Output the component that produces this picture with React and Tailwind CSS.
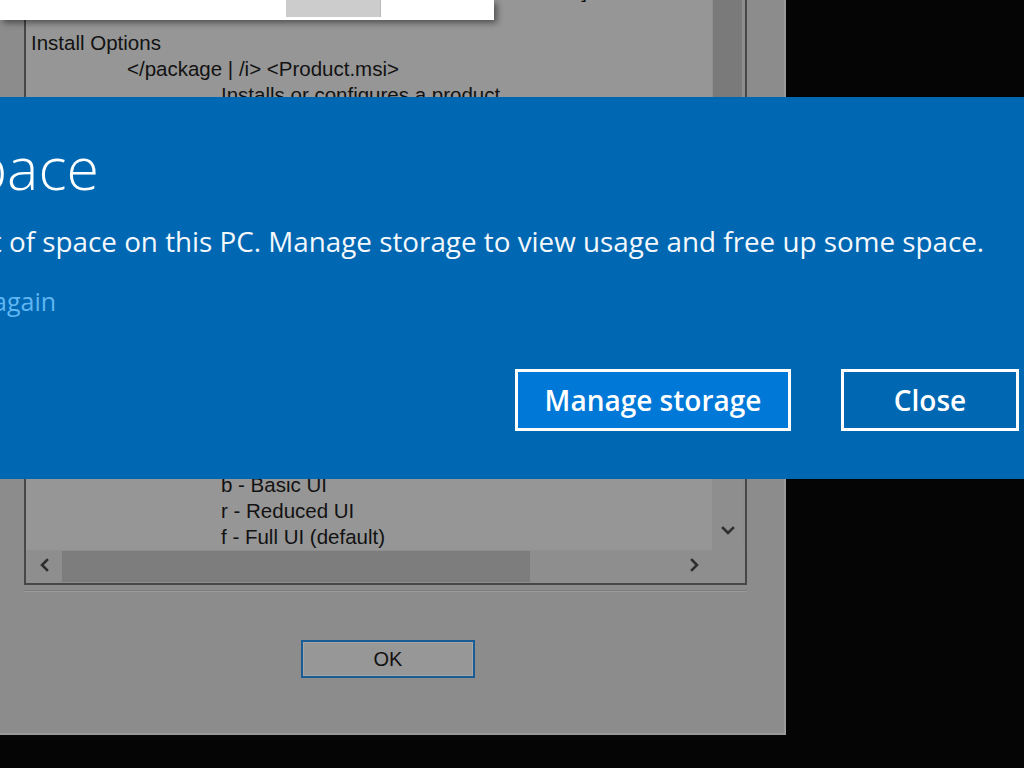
import React from "react";

const lines = [
  [0, "Windows \u00ae Installer. V 5.0.19041.1"],
  [0, ""],
  [0, "msiexec /Option <Required Parameter> [Optional Parameter]"],
  [0, ""],
  [0, "Install Options"],
  [1, "</package | /i> <Product.msi>"],
  [2, "Installs or configures a product"],
  [1, "</a> <Product.msi>"],
  [2, "Administrative install - Installs a product on the network"],
  [1, "</j<u|m> <Product.msi | /t <Transform List> | /g <Language ID>>"],
  [2, "Advertises a product - m to all users, u to current user"],
  [1, "</uninstall | /x> <Product.msi | ProductCode>"],
  [2, "Uninstalls the product"],
  [0, "Display Options"],
  [1, "/quiet"],
  [2, "Quiet mode, no user interaction"],
  [1, "/passive"],
  [2, "Unattended mode - progress bar only"],
  [1, "/q[n|b|r|f]"],
  [2, "Sets user interface level"],
  [2, "n - No UI"],
  [2, "b - Basic UI"],
  [2, "r - Reduced UI"],
  [2, "f - Full UI (default)"],
];

const indent = ["pl-[5px]", "pl-[101px]", "pl-[195px]"];

function Chevron({ dir }) {
  const pts = {
    left: "9,3 4,8 9,13",
    right: "5,3 10,8 5,13",
    down: "3,5 8,10 13,5",
  }[dir];
  return (
    <svg width="16" height="16" viewBox="0 0 16 16">
      <polyline points={pts} fill="none" stroke="#2e2e2e" strokeWidth="2.6" strokeLinecap="square" />
    </svg>
  );
}

export default function App() {
  return (
    <div className="relative w-[1024px] h-[768px] overflow-hidden bg-[#050505]">
      {/* Dimmed installer dialog */}
      <div className="flex flex-col w-[786px] h-[735px] bg-[#8c8c8c] border-r-2 border-b-2 border-[#9a9a9a] font-['Liberation_Sans',Arial,sans-serif] text-[#121212]">
        <div className="mt-[-76px] ml-[24px] w-[723px] flex flex-col border-2 border-[#474747]">
          <div className="flex">
            <div className="w-[686px] h-[624px] overflow-hidden bg-[#969696] flex flex-col">
              {lines.map(([lvl, t], i) => (
                <div key={i} className={`h-[26px] leading-[26px] text-[20.5px] whitespace-nowrap ${indent[lvl]}`}>
                  {t}
                </div>
              ))}
            </div>
            <div className="w-[31px] flex flex-col bg-[#8e8e8e]">
              <div className="h-[30px]" />
              <div className="h-[260px] bg-[#7a7a7a] mx-[1px]" />
              <div className="flex-1" />
              <div className="h-[38px] flex items-center justify-center">
                <Chevron dir="down" />
              </div>
            </div>
          </div>
          <div className="flex h-[33px] bg-[#8e8e8e] items-stretch">
            <div className="w-[36px] flex items-center justify-center pl-[4px] pb-[4px]">
              <Chevron dir="left" />
            </div>
            <div className="w-[468px] bg-[#7d7d7d] my-[1px]" />
            <div className="flex-1" />
            <div className="w-[38px] flex items-center justify-center pb-[4px]">
              <Chevron dir="right" />
            </div>
            <div className="w-[31px]" />
          </div>
        </div>
        <div className="ml-[24px] w-[723px] mt-[5px] border-t border-[#7c7c7c] border-b border-b-[#9c9c9c]" />
        <div className="ml-[301px] mt-[48px] w-[174px] h-[38px] border-2 border-[#1b5c94] flex">
          <div className="flex-1 border border-[#a6a6a6] bg-[#979797] flex items-center justify-center text-[20px] leading-none">
            OK
          </div>
        </div>
      </div>

      {/* White popup at top */}
      <div className="absolute left-0 top-0 w-[494px] h-[20px] bg-white shadow-[3px_3px_6px_rgba(0,0,0,0.45)] flex">
        <div className="ml-[286px] w-[95px] h-[17px] bg-[#cccccc] border-r border-[#b8b8b8]" />
      </div>

      {/* Blue banner */}
      <div className="absolute left-0 top-[97px] w-[1024px] h-[382px] bg-[#0067b2] overflow-hidden flex flex-col text-white font-['Open_Sans',sans-serif]">
        <div className="mt-[41px] ml-[-28px] flex whitespace-nowrap text-[59px] font-light leading-none">
          <span className="flex w-0 justify-end">Low on s</span>
          <span>pace</span>
        </div>
        <div className="mt-[31px] ml-[9px] flex whitespace-nowrap text-[27.8px] leading-none text-[#f4f8fc]">
          <span className="flex w-0 justify-end">You're running out{"\u00a0"}</span>
          <span>of space on this PC. Manage storage to view usage and free up some space.</span>
        </div>
        <div className="mt-[33px] ml-[7px] flex whitespace-nowrap text-[25px] leading-none text-[#5fb6f2]">
          <span className="flex w-0 justify-end">Don't show this a</span>
          <span>gain</span>
        </div>
        <div className="mt-[55px] flex justify-end gap-[50px] pr-[5px]">
          <div className="w-[276px] h-[62px] border-[3px] border-white bg-[#0078d7] flex items-center justify-center text-[28px] font-semibold leading-none">
            Manage storage
          </div>
          <div className="w-[178px] h-[62px] border-[3px] border-white flex items-center justify-center text-[28px] font-semibold leading-none">
            Close
          </div>
        </div>
      </div>
    </div>
  );
}
